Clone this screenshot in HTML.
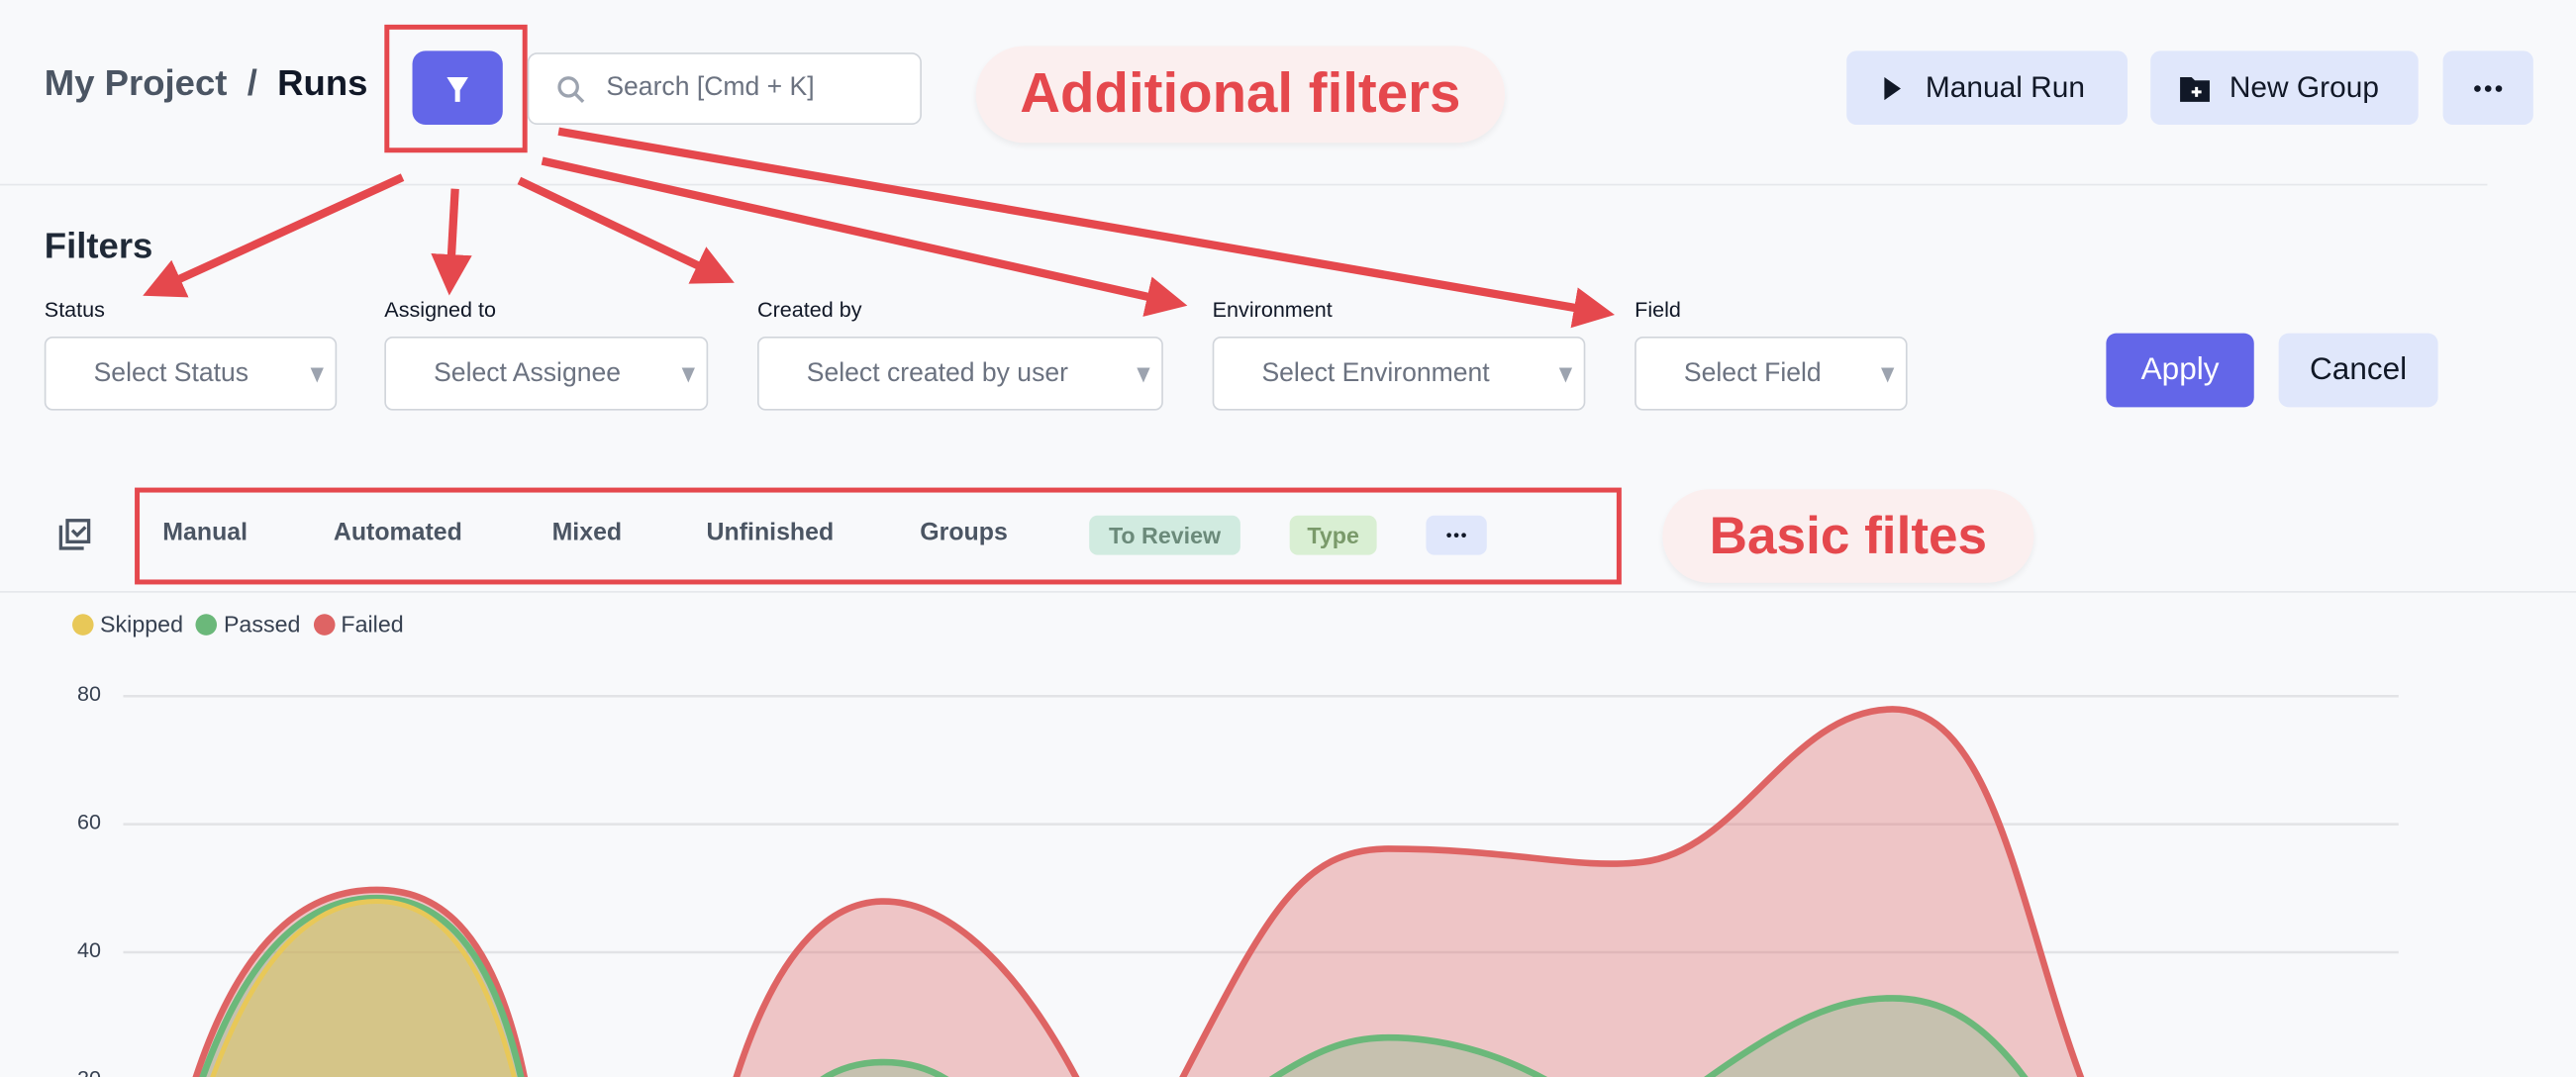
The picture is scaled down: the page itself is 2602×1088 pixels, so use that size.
<!DOCTYPE html>
<html><head><meta charset="utf-8"><style>
html,body{margin:0;padding:0;background:#f8f9fb;overflow:hidden;width:2602px;height:1088px}
#w{position:absolute;left:0;top:0;width:1568px;height:656px;overflow:hidden;transform-origin:0 0;transform:scale(1.65944,1.65854);font-family:"Liberation Sans",sans-serif;color:#111827}
.a{position:absolute;box-sizing:border-box}
.sel{background:#fff;border:1px solid #d1d5db;border-radius:5px;height:45px;top:205px;color:#6b7280;font-size:16px;line-height:43px;padding-left:29px}
.sel:after{content:"";position:absolute;right:7px;top:18px;border-left:4px solid transparent;border-right:4px solid transparent;border-top:9px solid #9ca3af}
.lbl{top:181px;font-size:13px;color:#111827}
.btn{background:#e0e7fb;border-radius:6px;top:31px;height:45px;font-size:18px;line-height:45px;color:#111827}
.tab{top:316px;font-size:15px;font-weight:bold;color:#4b5563}
.pill{top:314px;height:24px;border-radius:5px;font-size:14px;font-weight:bold;line-height:24px;text-align:center}
.ann{background:#fbefef;border-radius:30px;color:#e5484d;font-weight:bold;text-align:center;box-shadow:0 2px 4px rgba(0,0,0,.06)}
</style></head><body><div id="w">
<div class="a" style="left:27px;top:38px;font-size:22px;font-weight:bold;color:#4b5563">My Project &nbsp;/&nbsp; <span style="color:#111827">Runs</span></div>
<div class="a" style="left:234px;top:15px;width:87px;height:78px;border:3px solid #e5484d"></div>
<div class="a" style="left:251px;top:31px;width:55px;height:45px;background:#6366e8;border-radius:8px">
<svg width="55" height="45"><path d="M21 16h13l-5 8v7h-3v-7z" fill="#fff"/></svg></div>
<div class="a" style="left:321px;top:32px;width:240px;height:44px;background:#fff;border:1px solid #d1d5db;border-radius:6px;color:#6b7280;font-size:16px;line-height:42px;padding-left:47px">Search [Cmd + K]
<svg class="a" style="left:16px;top:12px" width="20" height="20"><circle cx="8" cy="8" r="5.5" fill="none" stroke="#9ca3af" stroke-width="2"/><path d="M12 12l5 5" stroke="#9ca3af" stroke-width="2"/></svg></div>
<div class="a ann" style="left:594px;top:28px;width:322px;height:59px;font-size:34px;line-height:59px">Additional filters</div>
<div class="a btn" style="left:1124px;width:171px;padding-left:48px">Manual Run<svg class="a" style="left:22px;top:16px" width="12" height="14"><path d="M1 0l10 7-10 7z" fill="#111827"/></svg></div>
<div class="a btn" style="left:1309px;width:163px;padding-left:48px">New Group<svg class="a" style="left:17px;top:14px" width="22" height="18"><path d="M1 2h7l2 2h9v13H1z" fill="#111827"/><path d="M11 8v6M8 11h6" stroke="#fff" stroke-width="1.8"/></svg></div>
<div class="a btn" style="left:1487px;width:55px">
<svg width="55" height="45"><circle cx="21" cy="23" r="2" fill="#111827"/><circle cx="27.5" cy="23" r="2" fill="#111827"/><circle cx="34" cy="23" r="2" fill="#111827"/></svg></div>
<div class="a" style="left:0;top:112px;width:1514px;height:1px;background:#e5e7eb"></div>
<div class="a" style="left:27px;top:137px;font-size:22px;font-weight:bold;color:#1f2937">Filters</div>
<div class="a lbl" style="left:27px">Status</div>
<div class="a lbl" style="left:234px">Assigned to</div>
<div class="a lbl" style="left:461px">Created by</div>
<div class="a lbl" style="left:738px">Environment</div>
<div class="a lbl" style="left:995px">Field</div>
<div class="a sel" style="left:27px;width:178px">Select Status</div>
<div class="a sel" style="left:234px;width:197px">Select Assignee</div>
<div class="a sel" style="left:461px;width:247px">Select created by user</div>
<div class="a sel" style="left:738px;width:227px">Select Environment</div>
<div class="a sel" style="left:995px;width:166px">Select Field</div>
<div class="a" style="left:1282px;top:203px;width:90px;height:45px;background:#6366e8;border-radius:6px;color:#fff;font-size:19px;line-height:45px;text-align:center">Apply</div>
<div class="a" style="left:1387px;top:203px;width:97px;height:45px;background:#e0e7fb;border-radius:6px;font-size:19px;line-height:45px;text-align:center">Cancel</div>
<svg class="a" style="left:0;top:0" width="1568" height="260">
<defs><marker id="ah" markerWidth="5" markerHeight="5" refX="3" refY="2.5" orient="auto"><path d="M0 0L5 2.5 0 5z" fill="#e5484d"/></marker></defs>
<g stroke="#e5484d" stroke-width="5" fill="none" marker-end="url(#ah)">
<path d="M245 108L96 176"/><path d="M277 115L274 170"/><path d="M316 110L438 168"/><path d="M330 98L713 184"/><path d="M340 80L973 190"/></g></svg>
<svg class="a" style="left:35px;top:315px" width="22" height="22"><path d="M2 5v14h14" fill="none" stroke="#4b5563" stroke-width="2"/><rect x="6" y="2" width="13" height="13" fill="none" stroke="#4b5563" stroke-width="2"/><path d="M9 8l3 3 5-5" fill="none" stroke="#4b5563" stroke-width="2"/></svg>
<div class="a" style="left:82px;top:297px;width:905px;height:59px;border:3px solid #e5484d"></div>
<div class="a tab" style="left:99px">Manual</div>
<div class="a tab" style="left:203px">Automated</div>
<div class="a tab" style="left:336px">Mixed</div>
<div class="a tab" style="left:430px">Unfinished</div>
<div class="a tab" style="left:560px">Groups</div>
<div class="a pill" style="left:663px;width:92px;background:#d1ebe0;color:#6b8a7a">To Review</div>
<div class="a pill" style="left:785px;width:53px;background:#d9efd3;color:#7a9a6a">Type</div>
<div class="a pill" style="left:868px;width:37px;background:#e0e7fb">
<svg width="37" height="24"><circle cx="14" cy="12" r="1.4" fill="#111827"/><circle cx="18.5" cy="12" r="1.4" fill="#111827"/><circle cx="23" cy="12" r="1.4" fill="#111827"/></svg></div>
<div class="a ann" style="left:1012px;top:298px;width:226px;height:57px;font-size:32px;line-height:57px">Basic filtes</div>
<div class="a" style="left:0;top:360px;width:1568px;height:1px;background:#e5e7eb"></div>
<div class="a" style="left:44px;top:372px;font-size:14px;color:#374151;line-height:16px">
<span style="display:inline-block;width:13px;height:13px;border-radius:50%;background:#e8c858;vertical-align:-2px"></span> Skipped &nbsp;<span style="display:inline-block;width:13px;height:13px;border-radius:50%;background:#6bb87a;vertical-align:-2px"></span> Passed &nbsp;<span style="display:inline-block;width:13px;height:13px;border-radius:50%;background:#de6464;vertical-align:-2px"></span> Failed</div>
<svg class="a" style="left:0;top:400px" width="1568" height="256" font-family="Liberation Sans" font-size="13" fill="#374151">
<g stroke="#e2e3e6" stroke-width="1.5"><path d="M75 24H1460M75 102H1460M75 180H1460M75 258H1460"/></g>
<text x="47" y="27">80</text><text x="47" y="105">60</text><text x="47" y="183">40</text><text x="47" y="261">20</text>
<g transform="translate(0,-400)">
<g fill="rgba(222,100,100,0.35)" stroke="#de6464" stroke-width="4">
<path d="M118 660C150 560 195 542 229 542C263 542 300 560 320 660Z"/>
<path d="M447 660C475 570 510 549 538 549C566 549 610 570 657 660Z"/>
<path d="M718 660C770 560 790 517 845 517C920 517 960 530 1000 525C1060 518 1090 432 1152 432C1215 432 1230 560 1268 660Z"/>
</g>
<g fill="rgba(107,184,122,0.3)" stroke="#6bb87a" stroke-width="4">
<path d="M122 660C155 565 197 547 229 547C261 547 297 565 318 660Z"/>
<path d="M497 660C510 650 525 647 538 647C551 647 566 650 580 660Z"/>
<path d="M770 660C800 640 820 632 845 632C875 632 910 640 945 660Z"/>
<path d="M1035 660C1090 620 1120 608 1152 608C1185 608 1210 625 1235 660Z"/>
</g>
<path d="M128 660C160 570 198 549 229 549C260 549 292 570 314 660Z" fill="rgba(232,200,88,0.45)" stroke="#e8c858" stroke-width="3"/>
</g></svg>
</div></body></html>
